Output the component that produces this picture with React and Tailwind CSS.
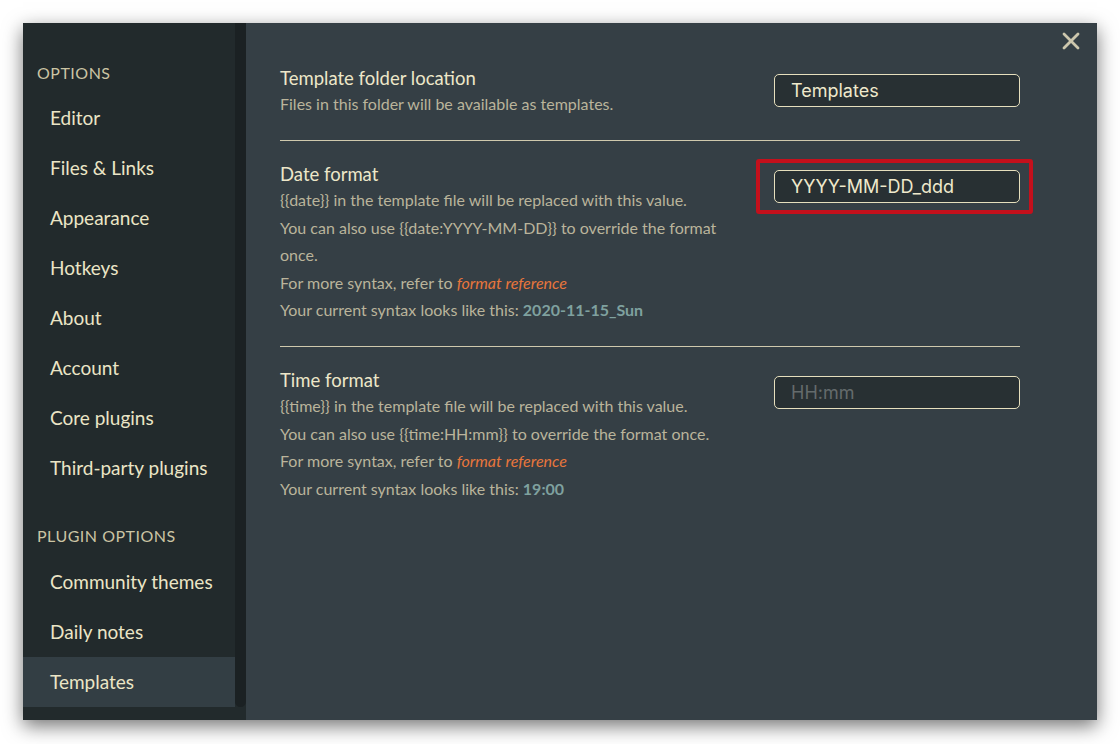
import { X } from 'lucide-react'

const NAV = ['Editor', 'Files & Links', 'Appearance', 'Hotkeys', 'About', 'Account', 'Core plugins', 'Third-party plugins']
const PLUGINS = ['Community themes', 'Daily notes', 'Templates']

const font = { fontFamily: 'Lato, "Noto Sans", sans-serif' }

function NavItem({ label, active }) {
  return (
    <div className={`h-[50px] flex items-center pl-[27px] text-[19px] text-[#ebe5c6] ${active ? 'bg-[#333e44]' : ''}`}>
      {label}
    </div>
  )
}

function Input({ value, placeholder }) {
  return (
    <div className="w-[246px] h-[33px] mt-2 rounded-[5px] border border-[#e6dfbd] bg-[#283033] flex items-center px-4 text-[18px]"
      style={{ fontFamily: 'Inter, "Liberation Sans", sans-serif' }}>
      {value
        ? <span className="text-[#efe9cc]">{value}</span>
        : <span className="text-[#646b6c]">{placeholder}</span>}
    </div>
  )
}

function Row({ title, children, control, last }) {
  return (
    <div className={`flex justify-between pt-[21px] pb-[23px] ${last ? '' : 'border-b border-[#cfc9ad]'}`}>
      <div>
        <div className="text-[18.5px] leading-6 text-[#ede7c9]">{title}</div>
        <div className="text-[16px] leading-[27.4px] text-[#bab49b]">{children}</div>
      </div>
      {control}
    </div>
  )
}

const Link = () => <span className="italic text-[#e8763c]">format reference</span>
const Val = ({ children }) => <span className="font-bold text-[#7fa19f]">{children}</span>

export default function App() {
  return (
    <div className="w-[1120px] h-[744px] bg-white pt-[23px] pl-[23px]" style={font}>
      <div className="w-[1074px] h-[697px] flex shadow-[0_6px_18px_rgba(0,0,0,0.55)]">
        <div className="flex bg-[#222a2c]">
          <div className="w-[212px] pt-[40px]">
            <div className="pl-[14px] text-[16px] leading-5 tracking-[0.5px] text-[#cbc4a4] mb-[10px]">OPTIONS</div>
            {NAV.map(n => <NavItem key={n} label={n} />)}
            <div className="pl-[14px] text-[16px] leading-5 tracking-[0.5px] text-[#cbc4a4] mt-[33px] mb-[11px]">PLUGIN OPTIONS</div>
            {PLUGINS.map(n => <NavItem key={n} label={n} active={n === 'Templates'} />)}
          </div>
          <div className="w-[11px] h-[684px] bg-[#1b2123] rounded-b-md" />
        </div>

        <div className="relative flex-1 bg-[#353f45] pl-[34px] pr-[77px] pt-[22px]">
          <X className="absolute right-[12px] top-[4px] text-[#cdc7ad]" size={28} strokeWidth={2.4} />

          <Row title="Template folder location" control={<Input value="Templates" />}>
            Files in this folder will be available as templates.
          </Row>

          <Row title="Date format" control={
            <div className="relative h-fit">
              <Input value="YYYY-MM-DD_ddd" />
              <div className="absolute -left-[18px] -right-[13px] -top-[3px] -bottom-[11px] border-4 border-[#c4101c] rounded-[3px]" />
            </div>
          }>
            <div>{'{{date}}'} in the template file will be replaced with this value.</div>
            <div>You can also use {'{{date:YYYY-MM-DD}}'} to override the format</div>
            <div>once.</div>
            <div>For more syntax, refer to <Link /></div>
            <div>Your current syntax looks like this: <Val>2020-11-15_Sun</Val></div>
          </Row>

          <Row title="Time format" last control={<Input placeholder="HH:mm" />}>
            <div>{'{{time}}'} in the template file will be replaced with this value.</div>
            <div>You can also use {'{{time:HH:mm}}'} to override the format once.</div>
            <div>For more syntax, refer to <Link /></div>
            <div>Your current syntax looks like this: <Val>19:00</Val></div>
          </Row>
        </div>
      </div>
    </div>
  )
}
